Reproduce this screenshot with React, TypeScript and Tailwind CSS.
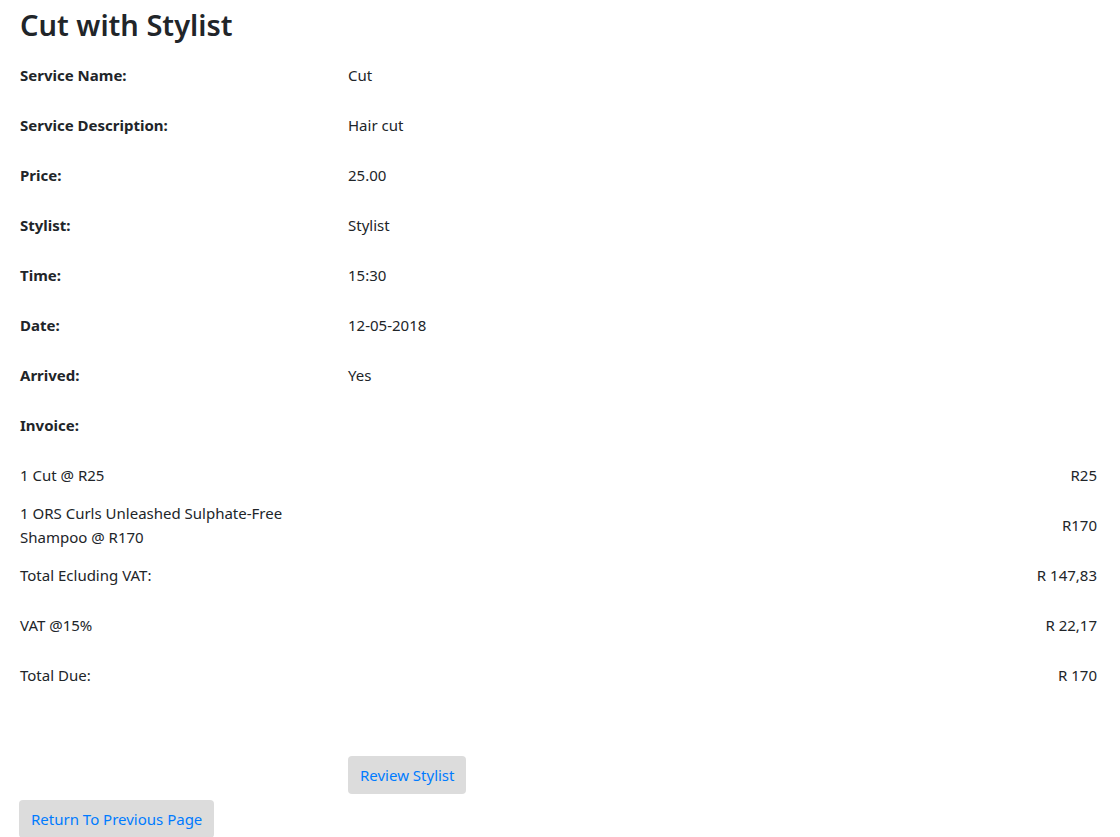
import React from 'react';

const details: [string, string][] = [
  ['Service Name:', 'Cut'],
  ['Service Description:', 'Hair cut'],
  ['Price:', '25.00'],
  ['Stylist:', 'Stylist'],
  ['Time:', '15:30'],
  ['Date:', '12-05-2018'],
  ['Arrived:', 'Yes'],
  ['Invoice:', ''],
];

const invoice: [string, string][] = [
  ['1 Cut @ R25', 'R25'],
  ['1 ORS Curls Unleashed Sulphate-Free Shampoo @ R170', 'R170'],
  ['Total Ecluding VAT:', 'R 147,83'],
  ['VAT @15%', 'R 22,17'],
  ['Total Due:', 'R 170'],
];

export default function App() {
  return (
    <div className="min-h-screen bg-white pl-5 pr-[23px] text-[15px] leading-6 text-[#212529]" style={{ fontFamily: '"Noto Sans", "Open Sans", sans-serif' }}>
      <h1 className="pt-[5px] text-[29px] font-semibold leading-[40px]">Cut with Stylist</h1>

      {/* Appointment details */}
      <div className="mt-[5px]">
        {details.map(([label, value]) => (
          <div key={label} className="grid h-[50px] grid-cols-[328px_1fr] items-center">
            <span className="font-bold">{label}</span>
            <span>{value}</span>
          </div>
        ))}
      </div>

      {/* Invoice lines */}
      <div>
        {invoice.map(([label, value]) => (
          <div key={label} className="flex h-[50px] items-center justify-between">
            <span className="w-[290px]">{label}</span>
            <span>{value}</span>
          </div>
        ))}
      </div>

      <div className="mt-[56px] grid grid-cols-[328px_1fr]">
        <div />
        <div>
          <button className="h-[38px] rounded bg-[#dcdcdc] px-3 text-[#007bff]">Review Stylist</button>
        </div>
      </div>
      <button className="-ml-px mt-[6px] h-[38px] rounded bg-[#dcdcdc] px-3 text-[#007bff]">Return To Previous Page</button>
    </div>
  );
}
